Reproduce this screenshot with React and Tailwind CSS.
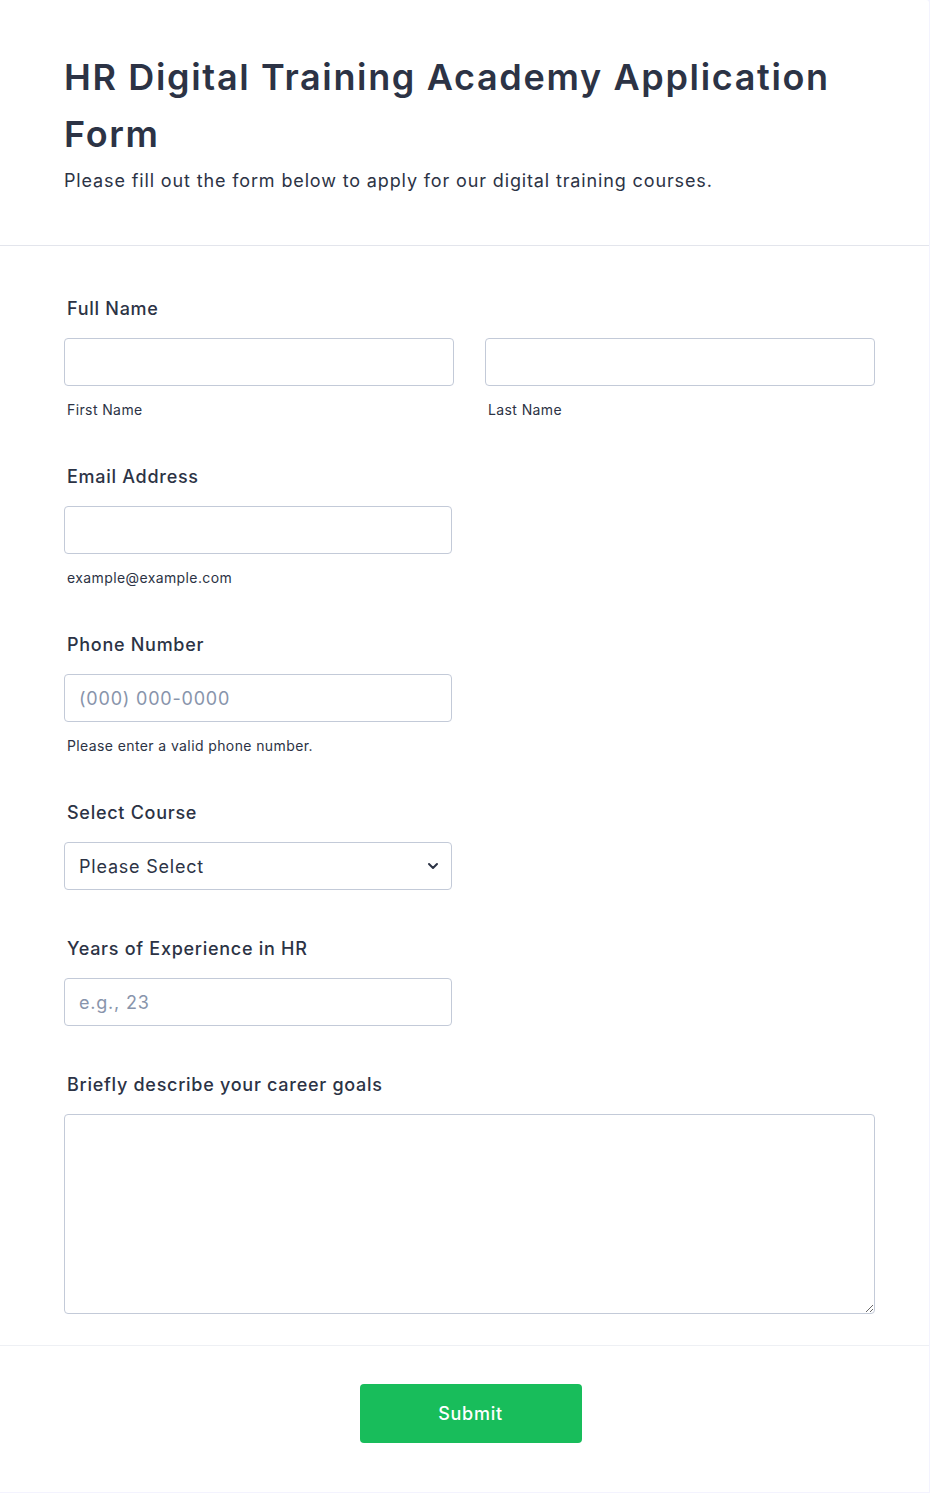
import React from 'react';

function Label({ children }) {
  return (
    <label className="block px-[3px] text-[18px] leading-[27px] tracking-[0.04em] font-medium text-[#2c3345] mb-4">
      {children}
    </label>
  );
}

function SubLabel({ children }) {
  return (
    <span className="block px-[3px] mt-[13px] text-[14px] leading-[21px] tracking-[0.028em] text-[#2c3345]">
      {children}
    </span>
  );
}

const inputCls =
  'block h-12 rounded border border-[#c3cad8] bg-white px-[14px] text-[18px] tracking-[0.044em] text-[#2c3345] placeholder:text-[#8894ab] outline-none';

export default function App() {
  return (
    <div className="min-h-[1493px] bg-[#f3f3fe]" style={{ fontFamily: 'Inter, "Noto Sans", sans-serif' }}>
      <div className="w-[929px] min-h-[1492px] bg-white rounded-tr-[3px]">
        {/* Header */}
        <div className="px-16 pt-[49px] pb-[51px] border-b border-[#e3e5ec]">
          <h1 className="text-[36px] leading-[57px] tracking-[0.046em] font-semibold text-[#2c3345]">
            HR Digital Training Academy Application Form
          </h1>
          <p className="mt-1 text-[18px] leading-[27px] tracking-[0.048em] text-[#2c3345]">
            Please fill out the form below to apply for our digital training courses.
          </p>
        </div>

        {/* Fields */}
        <div className="px-16 pt-[49px] pb-[31px] border-b border-[#eef0f4]">
          <div className="pb-[43px]">
            <Label>Full Name</Label>
            <div className="grid grid-cols-2 gap-[31px] w-[811px]">
              <div>
                <input className={`${inputCls} w-full`} type="text" />
                <SubLabel>First Name</SubLabel>
              </div>
              <div>
                <input className={`${inputCls} w-full`} type="text" />
                <SubLabel>Last Name</SubLabel>
              </div>
            </div>
          </div>

          <div className="pb-[43px]">
            <Label>Email Address</Label>
            <input className={`${inputCls} w-[388px]`} type="email" />
            <SubLabel>example@example.com</SubLabel>
          </div>

          <div className="pb-[43px]">
            <Label>Phone Number</Label>
            <input className={`${inputCls} w-[388px]`} type="tel" placeholder="(000) 000-0000" />
            <SubLabel>Please enter a valid phone number.</SubLabel>
          </div>

          <div className="pb-[45px]">
            <Label>Select Course</Label>
            <div className="relative w-[388px]">
              <select className={`${inputCls} w-full appearance-none`} defaultValue="">
                <option value="">Please Select</option>
              </select>
              <svg
                className="absolute right-[13px] top-[18px] w-3 h-3 pointer-events-none"
                viewBox="0 0 12 12"
                fill="none"
                stroke="#2c3345"
                strokeWidth="2"
                strokeLinecap="round"
                strokeLinejoin="round"
              >
                <path d="M2 4l4 4 4-4" />
              </svg>
            </div>
          </div>

          <div className="pb-[45px]">
            <Label>Years of Experience in HR</Label>
            <input className={`${inputCls} w-[388px]`} type="text" placeholder="e.g., 23" />
          </div>

          <div>
            <Label>Briefly describe your career goals</Label>
            <textarea className="block w-[811px] h-[200px] rounded border border-[#c3cad8] bg-white px-[14px] py-3 text-[18px] text-[#2c3345] outline-none" />
          </div>
        </div>

        {/* Submit */}
        <div className="flex justify-center pt-[38px] pl-3">
          <button className="w-[222px] h-[59px] rounded bg-[#18bd5b] text-white text-[18px] tracking-[0.04em] font-medium">
            Submit
          </button>
        </div>
      </div>
    </div>
  );
}
